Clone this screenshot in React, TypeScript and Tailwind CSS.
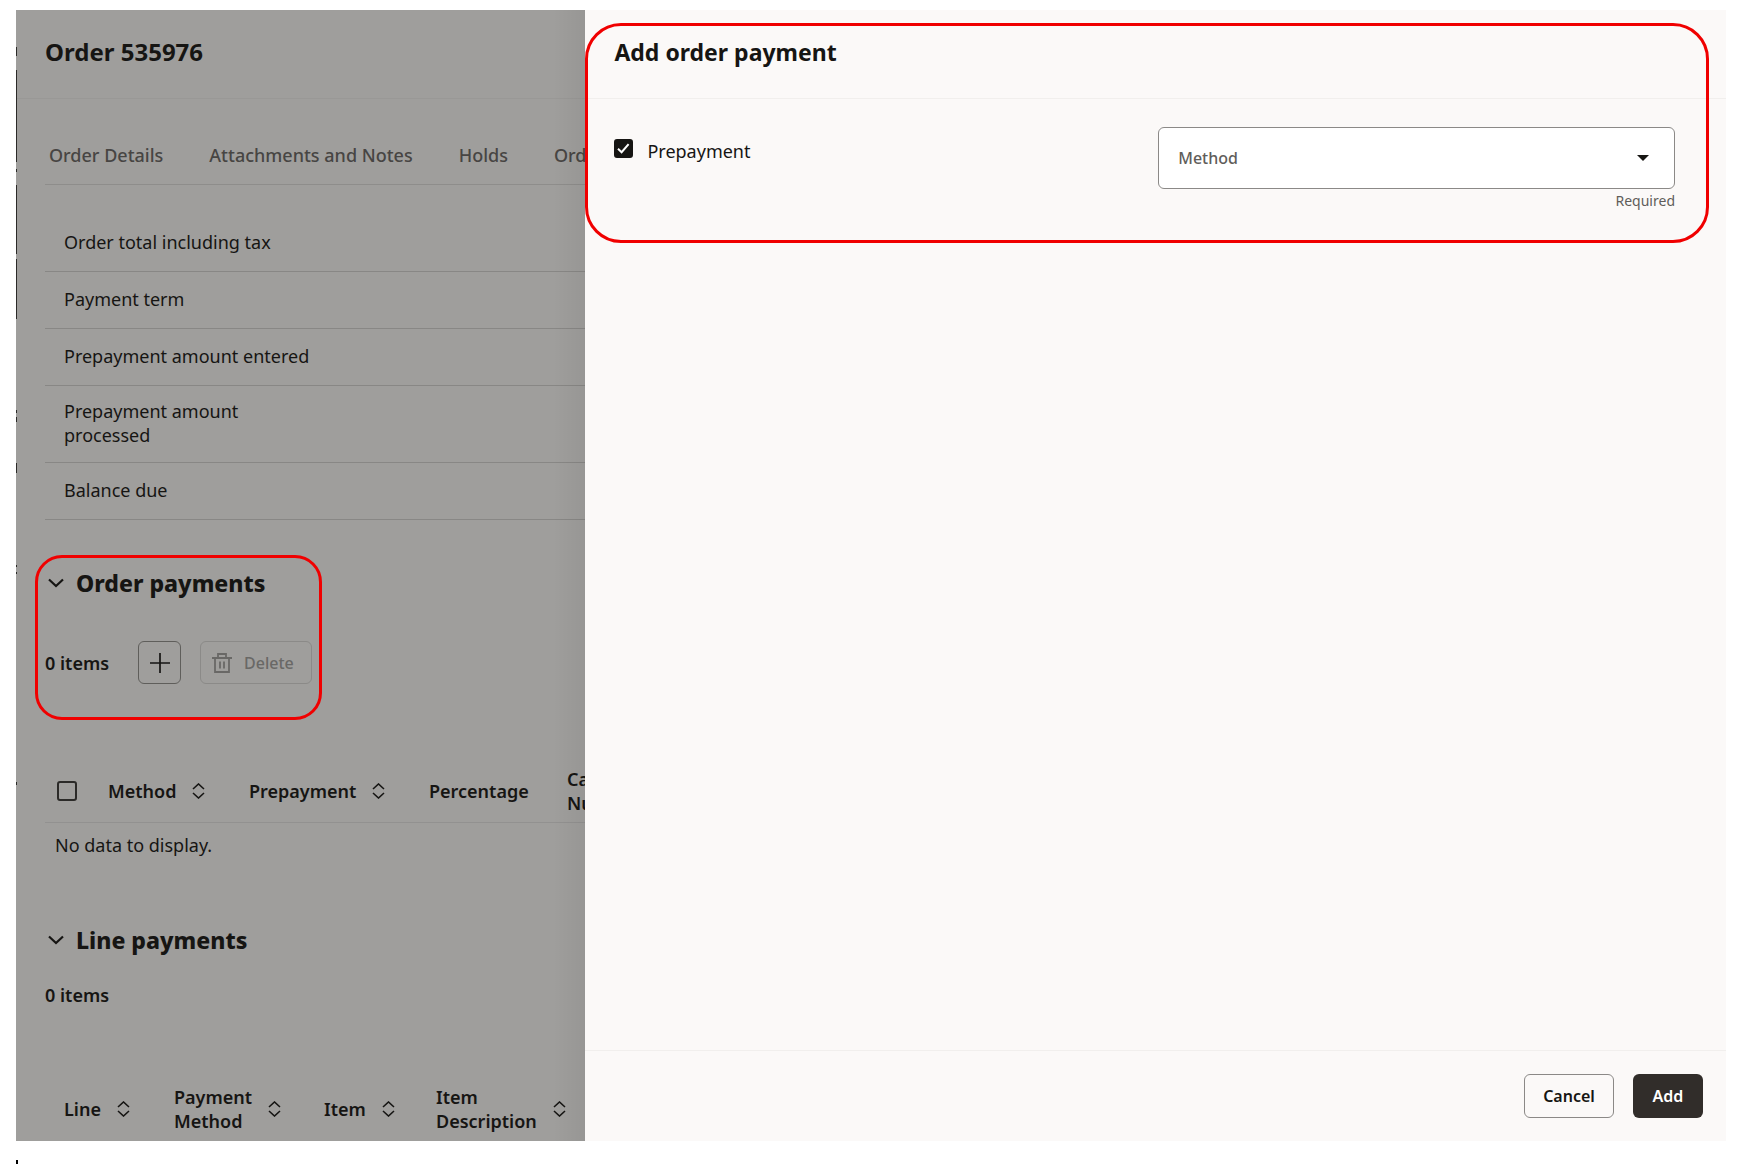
import { useState } from "react";
import clsx from "clsx";

const tabs = ["Order Details", "Attachments and Notes", "Holds", "Order"];

const summaryRows = [
  "Order total including tax",
  "Payment term",
  "Prepayment amount entered",
  "Prepayment amount processed",
  "Balance due",
];

const orderColumns = [
  { title: "Method", width: "w-[141px]", sortable: true },
  { title: "Prepayment", width: "w-[180px]", sortable: true },
  { title: "Percentage", width: "w-[138px]", sortable: false },
  { title: "Card Number", width: "w-[120px]", sortable: false },
];

const lineColumns = [
  { title: "Line", width: "w-[110px]", sortable: true },
  { title: "Payment Method", width: "w-[150px]", sortable: true },
  { title: "Item", width: "w-[112px]", sortable: true },
  { title: "Item Description", width: "w-[168px]", sortable: true },
];

const edgeMarks = [
  "top-[37px] h-[9px]",
  "top-[60px] h-[92px]",
  "top-[159px] h-[3px]",
  "top-[175px] h-[69px]",
  "top-[249px] h-[60px]",
  "top-[400px] h-[3px]",
  "top-[407px] h-[5px]",
  "top-[453px] h-[10px]",
  "top-[555px] h-[2px]",
  "top-[562px] h-[2px]",
  "top-[772px] h-[3px]",
];

const App = () => {
  return (
    <div className="bg-white pt-[10px] pr-6 pl-4 font-['Noto_Sans','Open_Sans',sans-serif] text-lg leading-6 text-[#161513]">
      <div className="flex">
        <OrderPage />
        <PaymentDrawer />
      </div>
      <div className="mt-[19px] h-1 w-0.5 bg-black" />
    </div>
  );
};

export default App;

const OrderPage = () => {
  return (
    <main className="relative w-[33.3%] shrink-0 overflow-hidden bg-[#9f9e9c]">
      <header className="flex h-[89px] items-start border-b border-[#999896] px-[29px] pt-[26px]">
        <h1 className="text-2xl leading-8 font-bold">Order 535976</h1>
      </header>

      <div className="ml-[29px]">
        <nav className="flex gap-[46px] border-b border-[#8e8d8b] pt-11 pb-[17px] pl-1 font-medium whitespace-nowrap text-[#474543]">
          {tabs.map((tab) => (
            <a key={tab} href="#">
              {tab}
            </a>
          ))}
        </nav>

        <ul className="pt-[30px]">
          {summaryRows.map((row) => (
            <li
              key={row}
              className="flex min-h-[57px] items-center border-b border-[#888785] pt-[13px] pb-[15px] pl-[19px]"
            >
              <span className={row.endsWith("processed") ? "w-[200px]" : ""}>{row}</span>
            </li>
          ))}
        </ul>
      </div>

      <section>
        <div className="mt-[35px] ml-[19px] w-[287px] rounded-[27px] border-3 border-[#f00000] pt-[9px] pb-[33px] pl-[7px]">
          <SectionTitle title="Order payments" />
          <div className="mt-[42px] flex items-center">
            <span className="w-[93px] font-semibold">0 items</span>
            <button
              type="button"
              aria-label="Add payment"
              className="flex h-[43px] w-[43px] items-center justify-center rounded-md border border-[#5f5e5b]"
            >
              <svg width="20" height="20" viewBox="0 0 20 20" stroke="currentColor" strokeWidth="1.7">
                <path d="M10 0V20M0 10H20" />
              </svg>
            </button>
            <button
              type="button"
              disabled
              className="ml-[19px] flex h-[43px] w-[112px] items-center gap-3 rounded-md border border-[#8b8a88] pl-[11px] text-base font-medium text-[#696866]"
            >
              <TrashIcon />
              Delete
            </button>
          </div>
        </div>

        <div className="ml-[29px]">
          <table className="mt-10 w-[623px] table-fixed">
            <thead>
              <tr className="border-b border-[#929190]">
                <th className="w-11 py-[7px] pl-3">
                  <input
                    type="checkbox"
                    aria-label="Select all payments"
                    className="block h-5 w-5 appearance-none rounded-[3px] border-2 border-[#2b2a28]"
                  />
                </th>
                {orderColumns.map((column) => (
                  <ColumnHeader key={column.title} {...column} />
                ))}
              </tr>
            </thead>
            <tbody>
              <tr>
                <td colSpan={5} className="py-[10px] pl-[10px]">
                  No data to display.
                </td>
              </tr>
            </tbody>
          </table>
        </div>
      </section>

      <section className="mt-[57px] ml-[29px]">
        <SectionTitle title="Line payments" />
        <p className="mt-[27px] font-semibold">0 items</p>
        <table className="mt-[71px] mb-px w-[540px] table-fixed">
          <thead>
            <tr>
              {lineColumns.map((column) => (
                <ColumnHeader key={column.title} {...column} />
              ))}
            </tr>
          </thead>
        </table>
      </section>

      {edgeMarks.map((mark) => (
        <span key={mark} className={clsx("absolute left-0 w-px bg-[#2b2a28]", mark)} />
      ))}
      <div className="pointer-events-none absolute inset-y-0 right-0 w-8 bg-linear-to-r from-transparent to-black/5" />
    </main>
  );
};

const PaymentDrawer = () => {
  const [prepayment, setPrepayment] = useState(true);

  return (
    <aside className="flex min-w-0 flex-1 flex-col bg-[#fbf9f8]">
      <div className="relative pb-8">
        <header className="h-[89px] border-b border-[#f1efed] px-[29px] pt-[26px]">
          <h2 className="text-[23px] leading-8 font-bold">Add order payment</h2>
        </header>

        <form className="grid grid-cols-2 gap-[27px] pt-7 pr-[51px] pl-[29px]">
          <div className="flex items-start pt-3">
            <span className="relative">
              <input
                id="prepayment"
                type="checkbox"
                checked={prepayment}
                onChange={(e) => setPrepayment(e.target.checked)}
                className="block h-[19px] w-[19px] appearance-none rounded-[3px] border-2 border-[#161513] checked:bg-[#161513]"
              />
              <svg
                className="pointer-events-none absolute inset-0"
                width="19"
                height="19"
                viewBox="0 0 19 19"
                fill="none"
                stroke="white"
                strokeWidth="2"
              >
                <path d="M4 9.8L7.6 13.2L14.6 5.2" />
              </svg>
            </span>
            <label htmlFor="prepayment" className="ml-[14px]">
              Prepayment
            </label>
          </div>

          <div>
            <div className="relative">
              <select
                id="method"
                defaultValue=""
                className="block h-[62px] w-full appearance-none rounded-md border border-[#8b8987] bg-white px-5"
              >
                <option value="" />
              </select>
              <label
                htmlFor="method"
                className="pointer-events-none absolute inset-y-0 left-5 flex items-center text-base font-medium text-[#5f5d5a]"
              >
                Method
              </label>
              <svg
                className="pointer-events-none absolute inset-y-0 right-[26px] my-auto"
                width="12"
                height="6"
                viewBox="0 0 12 6"
                fill="#161513"
              >
                <path d="M0 0H12L6 6Z" />
              </svg>
            </div>
            <p className="pt-0.5 text-right text-sm leading-5 text-[#5f5d5a]">Required</p>
          </div>
        </form>

        <div className="pointer-events-none absolute top-[13px] right-[17px] bottom-0 left-0 rounded-[36px] border-3 border-[#f00000]" />
      </div>

      <footer className="mt-auto flex justify-end gap-[19px] border-t border-[#f1efed] px-[23px] py-[23px] text-base font-semibold">
        <button type="button" className="h-11 w-[90px] rounded-md border border-[#8b8987]">
          Cancel
        </button>
        <button type="button" className="h-11 w-[70px] rounded-md bg-[#312d2a] text-white">
          Add
        </button>
      </footer>
    </aside>
  );
};

const SectionTitle = ({ title }: { title: string }) => {
  return (
    <div className="flex items-center pl-[3px]">
      <svg
        width="16"
        height="10"
        viewBox="0 0 16 10"
        fill="none"
        stroke="currentColor"
        strokeWidth="2.2"
      >
        <path d="M1 1.5L8 8L15 1.5" />
      </svg>
      <h2 className="ml-3 text-[23px] leading-8 font-extrabold">{title}</h2>
    </div>
  );
};

const ColumnHeader = ({
  title,
  width,
  sortable,
}: {
  title: string;
  width: string;
  sortable: boolean;
}) => {
  return (
    <th className={clsx("py-[7px] pl-[19px] text-left font-semibold", width)}>
      <div className="flex items-center gap-4">
        <span className={title.includes(" ") ? "w-min" : ""}>{title}</span>
        {sortable && (
          <button type="button" aria-label={`Sort by ${title}`}>
            <svg
              width="13"
              height="16"
              viewBox="0 0 13 16"
              fill="none"
              stroke="currentColor"
              strokeWidth="1.6"
            >
              <path d="M1 6L6.500 1L12 6M1 10L6.500 15L12 10" />
            </svg>
          </button>
        )}
      </div>
    </th>
  );
};

const TrashIcon = () => {
  return (
    <svg
      width="20"
      height="20"
      viewBox="0 0 20 20"
      fill="none"
      stroke="currentColor"
      strokeWidth="1.8"
    >
      <path d="M0 5H20M6 5V1H14V5M3 5V19H17V5M8 8.500V15.500M12 8.500V15.500" />
    </svg>
  );
};
